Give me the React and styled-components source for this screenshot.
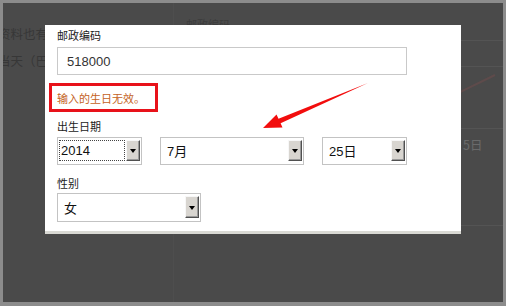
import React from "react";
import styled, { createGlobalStyle } from "styled-components";

const Global = createGlobalStyle`
  html, body { margin: 0; padding: 0; background: #4a4a4a; }
  body { font-family: "Liberation Sans", "Noto Sans CJK SC", sans-serif; }
`;

const Frame = styled.div`
  position: relative;
  width: 506px;
  height: 306px;
  box-sizing: border-box;
  border: 3px solid #8c8c8c;
  border-bottom-width: 4px;
  background: #4a4a4a;
  overflow: hidden;
`;

/* ---------- dimmed page underneath ---------- */
const BackPage = styled.div`
  display: grid;
  grid-template-columns: 170px 1fr 42px;
  height: 100%;
`;

const BackLeft = styled.div`
  display: flex;
  flex-direction: column;
  gap: 9px;
  padding-top: 22px;
  margin-left: -5px;
  overflow: hidden;
`;

const BackText = styled.div`
  font-family: "Noto Sans CJK SC", sans-serif;
  font-size: ${(p) => p.$size || 12.5}px;
  line-height: 18px;
  color: ${(p) => p.$color || "#373737"};
  white-space: nowrap;
`;

const BackMiddle = styled.div`
  padding: 12px 0 0 12px;
  display: flex;
  flex-direction: column;
  border-left: 1px solid #4e4e4e;
`;

const BackRight = styled.div`
  display: flex;
  flex-direction: column;
  overflow: hidden;
`;

const RuleCell = styled.div`
  height: ${(p) => p.$h}px;
  flex-shrink: 0;
  border-bottom: 1px solid #545454;
  display: flex;
  align-items: flex-start;
`;

const DayText = styled(BackText)`
  margin: 7px 0 0 2px;
`;

/* ---------- modal ---------- */
const Dialog = styled.div`
  position: absolute;
  left: 42px;
  top: 22px;
  width: 416px;
  box-sizing: border-box;
  background: #ffffff;
  padding: 2px 12px 9px 12px;
  border-bottom: 3px solid #d9d9d4;
  display: flex;
  flex-direction: column;
  align-items: flex-start;
`;

const Label = styled.div`
  font-family: "Noto Sans CJK SC", sans-serif;
  font-size: 11px;
  line-height: 16px;
  color: #222;
  margin-top: ${(p) => p.$mt || 0}px;
`;

const TextInput = styled.div`
  margin-top: 4px;
  width: 350px;
  height: 28px;
  box-sizing: border-box;
  border: 1px solid #c9c9c9;
  padding-left: 9px;
  display: flex;
  align-items: center;
  font-size: 13px;
  color: #333;
`;

const ErrorBox = styled.div`
  margin-top: 8px;
  margin-left: -8px;
  width: 109px;
  height: 29px;
  box-sizing: border-box;
  border: 3px solid #e8121a;
  padding-left: 5px;
  display: flex;
  align-items: center;
  font-family: "Noto Sans CJK SC", sans-serif;
  font-size: 11px;
  color: #c4621c;
  white-space: nowrap;
`;

const SelectRow = styled.div`
  margin-top: ${(p) => p.$mt || 0}px;
  display: flex;
  gap: 18px;
`;

const Select = styled.div`
  width: ${(p) => p.$w}px;
  height: ${(p) => p.$h || 28}px;
  box-sizing: border-box;
  border: 1px solid #c3c3c3;
  background: #fff;
  padding: 2px 1px 3px 0;
  display: flex;
  align-items: stretch;
`;

const Value = styled.div`
  flex: 1;
  display: flex;
  align-items: center;
  font-size: 13px;
  color: #111;
  padding-left: ${(p) => (p.$focused ? 1 : 5)}px;
  margin: ${(p) => (p.$focused ? "0 1px 0 1px" : "0")};
  border: ${(p) => (p.$focused ? "1px dotted #444" : "1px solid transparent")};
`;

const DropButton = styled.div`
  width: 14px;
  box-sizing: border-box;
  background: #d8d5d0;
  border-top: 1px solid #f7f7f7;
  border-left: 1px solid #f7f7f7;
  border-right: 1px solid #505050;
  border-bottom: 1px solid #505050;
  box-shadow: inset -1px -1px 0 #9a9a9a;
  display: flex;
  align-items: center;
  justify-content: center;
`;

const Caret = styled.span`
  width: 0;
  height: 0;
  border-left: 3px solid transparent;
  border-right: 3px solid transparent;
  border-top: 4px solid #000;
  margin-top: 1px;
`;

const Overlay = styled.svg`
  position: absolute;
  left: -3px;
  top: -3px;
  width: 506px;
  height: 306px;
  pointer-events: none;
`;

function Dropdown({ w, h, value, focused }) {
  return (
    <Select $w={w} $h={h}>
      <Value $focused={focused}>{value}</Value>
      <DropButton>
        <Caret />
      </DropButton>
    </Select>
  );
}

export default function App() {
  return (
    <>
      <Global />
      <Frame>
        <BackPage>
          <BackLeft>
            <BackText>资料也有</BackText>
            <BackText>当天（巴</BackText>
          </BackLeft>
          <BackMiddle>
            <BackText $size={11} $color="#3c3c3c">邮政编码</BackText>
          </BackMiddle>
          <BackRight>
            <RuleCell $h={37} />
            <RuleCell $h={25} />
            <RuleCell $h={61}>
              <svg width="42" height="61" viewBox="0 0 42 61">
                <line x1="-1" y1="25" x2="34" y2="8" stroke="#5e4b4b" strokeWidth="2" />
              </svg>
            </RuleCell>
            <RuleCell $h={96}>
              <DayText $size={12.5} $color="#6a6a6a">5日</DayText>
            </RuleCell>
          </BackRight>
        </BackPage>

        <Dialog>
          <Label>邮政编码</Label>
          <TextInput>518000</TextInput>
          <ErrorBox>输入的生日无效。</ErrorBox>
          <Label $mt={6}>出生日期</Label>
          <SelectRow $mt={3}>
            <Dropdown w={85} value="2014" focused />
            <Dropdown w={144} value="7月" />
            <Dropdown w={85} value="25日" />
          </SelectRow>
          <Label $mt={10}>性别</Label>
          <SelectRow $mt={2}>
            <Dropdown w={144} h={29} value="女" />
          </SelectRow>
        </Dialog>

        <Overlay viewBox="0 0 506 306">
          <polygon
            points="263,128 276.5,114.5 278.5,118.8 368,83 280.6,123.2 282.5,127.5"
            fill="#f20d0d"
          />
        </Overlay>
      </Frame>
    </>
  );
}
